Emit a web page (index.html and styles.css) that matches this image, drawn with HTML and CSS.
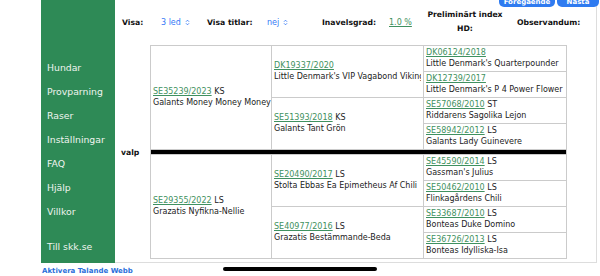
FILE: index.html
```html
<!DOCTYPE html>
<html lang="sv">
<head>
  <meta charset="UTF-8">
  <meta name="viewport" content="width=device-width, initial-scale=1.0">
  <title>Avelsdata - Provparning</title>
  <link rel="stylesheet" href="styles.css">
</head>
<body>
  <div class="page">
    <div class="sidebar">
      <ul class="menu">
        <li><a href="#">Hundar</a></li>
        <li><a href="#">Provparning</a></li>
        <li><a href="#">Raser</a></li>
        <li><a href="#">Inställningar</a></li>
        <li><a href="#">FAQ</a></li>
        <li><a href="#">Hjälp</a></li>
        <li><a href="#">Villkor</a></li>
      </ul>
      <a class="home-link" href="#">Till skk.se</a>
    </div>

    <div class="main">
      <div class="nav-btns">
        <button class="btn-prev">Föregående</button>
        <button class="btn-next">Nästa</button>
      </div>

      <div class="opts">
        <span class="lbl w-visa">Visa:</span>
        <span class="sel w-led">3 led
          <svg class="updown" width="5" height="7" viewBox="0 0 5 7"><path d="M1 2.7L2.5 1.2L4 2.7M1 4.3L2.5 5.8L4 4.3" fill="none" stroke="#3478f6" stroke-width="0.9"/></svg>
        </span>
        <span class="lbl w-titlar">Visa titlar:</span>
        <span class="sel w-nej">nej
          <svg class="updown" width="5" height="7" viewBox="0 0 5 7"><path d="M1 2.7L2.5 1.2L4 2.7M1 4.3L2.5 5.8L4 4.3" fill="none" stroke="#3478f6" stroke-width="0.9"/></svg>
        </span>
        <span class="lbl w-inavel">Inavelsgrad:</span>
        <span class="w-grad"><a href="#">1.0 %</a></span>
        <span class="lbl prelim">Preliminärt index<br>HD:</span>
        <span class="lbl obs">Observandum:</span>
      </div>

      <div class="pedigree">
        <div class="valp">valp</div>
        <div class="tree">
          <div class="cell g1"><div><a href="#">SE35239/2023</a> KS</div><div>Galants Money Money Money</div></div>
          <div class="cell g2"><div><a href="#">DK19337/2020</a></div><div>Little Denmark's VIP Vagabond Viking</div></div>
          <div class="cell g3"><div><a href="#">DK06124/2018</a></div><div>Little Denmark's Quarterpounder</div></div>
          <div class="cell g3"><div><a href="#">DK12739/2017</a></div><div>Little Denmark's P 4 Power Flower</div></div>
          <div class="cell g2"><div><a href="#">SE51393/2018</a> KS</div><div>Galants Tant Grön</div></div>
          <div class="cell g3"><div><a href="#">SE57068/2010</a> ST</div><div>Riddarens Sagolika Lejon</div></div>
          <div class="cell g3"><div><a href="#">SE58942/2012</a> LS</div><div>Galants Lady Guinevere</div></div>

          <div class="bar"></div>

          <div class="cell g1"><div><a href="#">SE29355/2022</a> LS</div><div>Grazatis Nyfikna-Nellie</div></div>
          <div class="cell g2"><div><a href="#">SE20490/2017</a> LS</div><div>Stolta Ebbas Ea Epimetheus Af Chili</div></div>
          <div class="cell g3"><div><a href="#">SE45590/2014</a> LS</div><div>Gassman's Julius</div></div>
          <div class="cell g3"><div><a href="#">SE50462/2010</a> LS</div><div>Flinkagårdens Chili</div></div>
          <div class="cell g2"><div><a href="#">SE40977/2016</a> LS</div><div>Grazatis Bestämmande-Beda</div></div>
          <div class="cell g3"><div><a href="#">SE33687/2010</a> LS</div><div>Bonteas Duke Domino</div></div>
          <div class="cell g3"><div><a href="#">SE36726/2013</a> LS</div><div>Bonteas Idylliska-Isa</div></div>
        </div>
      </div>
    </div>
  </div>

  <a class="talande" href="#">Aktivera Talande Webb</a>
  <div class="home-bar"></div>
</body>
</html>
```

FILE: styles.css
```css
body {
  margin: 0;
  padding: 0;
  position: relative;
  height: 276px;
  overflow: hidden;
  font-family: "DejaVu Sans", Verdana, sans-serif;
  font-size: 8px;
  color: #222;
  background: #fff;
}
a {
  color: #3f9160;
}

.page {
  display: flex;
  height: 263px;
  padding-left: 41px;
}

/* vänstermeny */
.sidebar {
  width: 74px;
  flex-shrink: 0;
  background: #2e8a56;
  padding: 56px 0 0 6px;
  box-sizing: border-box;
}
.menu {
  list-style: none;
  margin: 0;
  padding: 0;
}
.menu a,
.home-link {
  display: block;
  line-height: 24px;
  font-size: 9.3px;
  color: #eef4ef;
  text-decoration: none;
}
.home-link {
  margin-top: 11px;
}

.main {
  width: 481px;
  border-right: 1px solid #ddd;
  border-bottom: 1px solid #ddd;
}

.nav-btns {
  display: flex;
  justify-content: flex-end;
  gap: 2px;
  margin: -5px -3px 0 0;
}
.nav-btns button {
  height: 12px;
  padding: 0;
  border: none;
  border-radius: 5px;
  background: #2f7bf0;
  color: #fff;
  font-family: "DejaVu Sans", Verdana, sans-serif;
  font-size: 7px;
  font-weight: bold;
  line-height: 14px;
}
.btn-prev {
  width: 56px;
}
.btn-next {
  width: 42px;
}

.opts {
  display: flex;
  align-items: center;
  height: 30px;
  padding-left: 7px;
}
.lbl {
  font-weight: bold;
  font-size: 7.7px;
  color: #111;
}
.sel {
  color: #3478f6;
  display: flex;
  align-items: center;
  gap: 4px;
}
.w-visa { width: 39px; }
.w-led { width: 46px; }
.w-titlar { width: 60px; }
.w-nej { width: 55px; }
.w-inavel { width: 67px; }
.w-grad { width: 38px; }
.prelim {
  width: 76px;
  text-align: center;
  line-height: 14px;
}
.obs {
  margin-left: 14px;
}

/* stamtavla */
.pedigree {
  display: flex;
  align-items: center;
  margin-top: 8px;
}
.valp {
  width: 35px;
  padding-left: 6px;
  box-sizing: border-box;
  font-weight: bold;
  font-size: 7.7px;
  color: #111;
}
.tree {
  display: grid;
  grid-template-columns: 120px 151px 142px;
  grid-template-rows: repeat(4, 25px) 4px repeat(4, 25px);
  gap: 1px;
  padding: 1px;
  background: #cbcbcb;
}
.cell {
  background: #fff;
  padding: 0 2px;
  display: flex;
  flex-direction: column;
  justify-content: center;
  overflow: hidden;
  white-space: nowrap;
  line-height: 10.5px;
}
.g1 {
  grid-column: 1;
  grid-row: span 4;
}
.g2 {
  grid-column: 2;
  grid-row: span 2;
}
.g2 > div {
  overflow: hidden;
}
.g3 {
  grid-column: 3;
}
.bar {
  grid-column: 1 / -1;
  background: #000;
}

.talande {
  display: block;
  margin: 3px 0 0 42px;
  line-height: 10px;
  font-size: 7px;
  font-weight: bold;
  color: #2a6fdb;
  text-decoration: none;
}
.home-bar {
  position: absolute;
  left: 223px;
  top: 267px;
  width: 154px;
  height: 4px;
  border-radius: 2px;
  background: #000;
}
```
